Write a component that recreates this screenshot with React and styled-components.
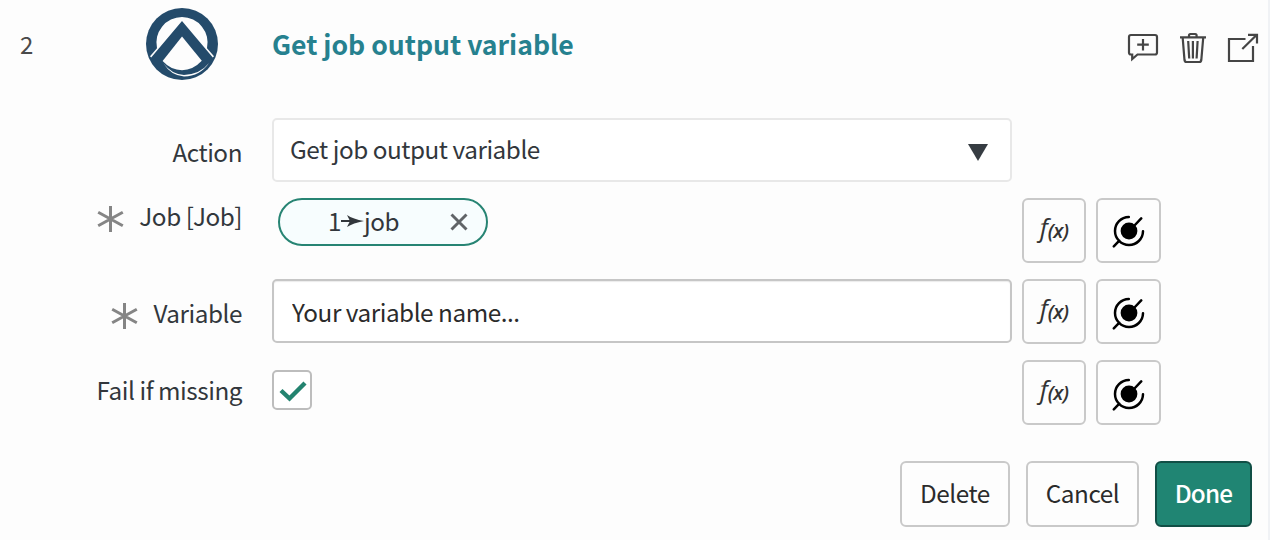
import React from "react";
import styled, { createGlobalStyle } from "styled-components";

const Global = createGlobalStyle`
  *, *::before, *::after { box-sizing: border-box; }
  body {
    margin: 0;
    background: #fdfdfd;
    color: #32373c;
    font-family: "Noto Sans CJK SC", "Open Sans", sans-serif;
    font-size: 24.3px;
    letter-spacing: -0.46px;
    line-height: 36px;
  }
`;

const Card = styled.section`
  display: flex;
  flex-direction: column;
  width: 1270px;
  height: 540px;
  overflow: hidden;
  background: #fdfdfd;
  border-right: 2px solid #f0f2f5;
`;

const Header = styled.header`
  display: flex;
  align-items: flex-start;
  height: 118px;
  padding: 8px 9px 0 20px;
`;

const StepNumber = styled.span`
  width: 126px;
  padding-top: 18px;
  font-size: 24px;
  color: #4a4a4a;
`;

const Logo = styled.svg`
  width: 72px;
  height: 72px;
  flex: none;
`;

const Title = styled.h2`
  flex: 1;
  margin: 0;
  padding: 18px 0 0 54px;
  font-size: 26.6px;
  font-weight: 700;
  letter-spacing: -0.02px;
  color: #26818f;
`;

const HeaderIcons = styled.div`
  display: flex;
  gap: 18px;
  padding-top: 23px;
`;

const HeaderIcon = styled.svg`
  width: 32px;
  height: 34px;
  fill: none;
  stroke: #454545;
  stroke-width: 2.2;
`;

const Form = styled.div`
  display: flex;
  flex-direction: column;
  gap: 16px;
`;

const Row = styled.div`
  display: flex;
  align-items: flex-start;
  height: ${(p) => p.$height || 65}px;
`;

const Label = styled.label`
  display: flex;
  justify-content: flex-end;
  align-items: center;
  gap: 15px;
  width: 242px;
  margin-right: 30px;
  padding-top: ${(p) => p.$top}px;
`;

const Star = styled.svg`
  width: 27px;
  height: 28px;
  margin-top: 6px;
  stroke: #858585;
  stroke-width: 3;
`;

const Field = styled.div`
  display: flex;
  width: 740px;
  margin-right: 10px;
`;

const Select = styled.div`
  display: flex;
  justify-content: space-between;
  align-items: center;
  width: 100%;
  height: 64px;
  padding: 0 22px 2px 16px;
  border: 2px solid #e8e8e8;
  border-radius: 5px;
  background: #fff;
`;

const Caret = styled.svg`
  width: 20px;
  height: 17px;
  margin-top: 6px;
  fill: #363c42;
`;

const TextInput = styled.input`
  width: 100%;
  height: 64px;
  padding: 0 17px 0 18px;
  border: 2px solid #c6c6c6;
  border-radius: 5px;
  background: #fff;
  box-shadow: inset 0 1px 1px rgba(0, 0, 0, 0.08);
  color: #2b2b2b;
  font: inherit;
  letter-spacing: inherit;
  outline: none;
`;

const Pill = styled.div`
  display: flex;
  align-items: center;
  justify-content: space-between;
  width: 210px;
  height: 48px;
  margin-left: 6px;
  padding: 0 18px 0 48px;
  border: 2px solid #278473;
  border-radius: 24px;
  background: #f7fdfe;
`;

const PillText = styled.span`
  display: flex;
  align-items: center;
  margin-top: -2px;
`;

const Arrow = styled.svg`
  width: 23px;
  height: 14px;
  fill: #32373c;
`;

const Close = styled.svg`
  width: 18px;
  height: 18px;
  stroke: #606467;
  stroke-width: 2.9;
`;

const Checkbox = styled.div`
  display: flex;
  align-items: center;
  justify-content: center;
  width: 40px;
  height: 40px;
  margin-top: 10px;
  border: 2px solid #bdbdbd;
  border-radius: 5px;
  background: #fff;
`;

const Check = styled.svg`
  width: 28px;
  height: 22px;
  margin: 2px 0 0 1px;
  fill: none;
  stroke: #23836f;
  stroke-width: 4.4;
`;

const Tools = styled.div`
  display: flex;
  gap: 10px;
`;

const ToolButton = styled.button`
  display: flex;
  align-items: center;
  justify-content: center;
  width: ${(p) => p.$width}px;
  height: 65px;
  padding: ${(p) => p.$drop || 0}px 0 0;
  border: 2px solid #c9c9c9;
  border-radius: 6px;
  background: #fdfdfd;
`;

const Fx = styled.span`
  display: flex;
  align-items: baseline;
  padding-bottom: 4px;
  font-family: "Open Sans", sans-serif;
  font-style: italic;
  font-weight: 500;
  font-size: 26px;
  line-height: 32px;
  color: #333;
`;

const FxArg = styled.span`
  position: relative;
  top: 1px;
  font-size: 20px;
  font-weight: 600;
  letter-spacing: -0.7px;
`;

const Pin = styled.svg`
  width: 34px;
  height: 34px;
  fill: none;
  stroke: #000;
  stroke-width: 2.5;
  stroke-linecap: round;
`;

const Footer = styled.footer`
  display: flex;
  justify-content: flex-end;
  gap: 16px;
  padding: 36px 16px 0 0;
`;

const Action = styled.button`
  width: ${(p) => p.$width}px;
  height: 66px;
  padding: 0 0 2px;
  border: 2px solid ${(p) => (p.$primary ? "#114f46" : "#c9c9c9")};
  border-radius: 6px;
  background: ${(p) => (p.$primary ? "#208573" : "#fdfdfd")};
  color: ${(p) => (p.$primary ? "#fff" : "#2b2b2b")};
  font: inherit;
  font-weight: ${(p) => (p.$primary ? 500 : 400)};
  letter-spacing: ${(p) => (p.$primary ? "-0.8px" : "inherit")};
`;

const Required = () => (
  <Star viewBox="0 0 27 28">
    <path d="M13.5 1v26M1.2 7.2l24.6 13.6M25.8 7.2L1.2 20.8" />
  </Star>
);

const FieldTools = ({ drop }) => (
  <Tools>
    <ToolButton $width={64}>
      <Fx>f<FxArg>(x)</FxArg></Fx>
    </ToolButton>
    <ToolButton $width={65} $drop={drop}>
      <Pin viewBox="0 0 34 34">
        <circle cx="17" cy="17" r="8.4" fill="#000" stroke="none" />
        <path d="M16.8 3A14 14 0 1 0 31 17.2M22 12L29.2 4.4M7.3 26.7L1.8 32.3" />
      </Pin>
    </ToolButton>
  </Tools>
);

export default function App() {
  return (
    <>
      <Global />
      <Card>
        <Header>
          <StepNumber>2</StepNumber>
          <Logo viewBox="0 0 72 72">
            <circle cx="36" cy="36" r="36" fill="#244b6b" />
            <path
              d="M4 48.2L11 40.2A25.6 25.6 0 1 1 61 40.2L68 48.2L66.8 49.4L36 13L5.2 49.4Z"
              fill="#fdfdfd"
            />
            <path d="M36 28.5L55.8 52.8Q47 62.2 36 62.2Q25 62.2 16.6 53Z" fill="#fdfdfd" />
            <path
              d="M17.6 55.5Q26 66.6 38 66.9Q54 66.4 63 55Q54 68.2 38 68.4Q25 67.6 17.6 55.5Z"
              fill="#fdfdfd"
            />
          </Logo>
          <Title>Get job output variable</Title>
          <HeaderIcons>
            <HeaderIcon viewBox="0 0 32 34">
              <path d="M4 4H28Q30 4 30 6V21.5Q30 23.5 28 23.5H10.5L5.2 28V23.5H4Q2 23.5 2 21.5V6Q2 4 4 4ZM16 8V19.5M10.2 13.7H21.8" />
            </HeaderIcon>
            <HeaderIcon viewBox="0 0 32 34">
              <path d="M3 6.4H29M12 6V4.4Q12 3 13.4 3H18.2Q19.6 3 19.6 4.4V6M5.7 7L7.5 29Q7.8 31 9.5 31H22.3Q24 31 24.3 29L26.2 7M11.2 10L12.2 27.5M15.9 10V27.5M20.6 10L19.6 27.5" />
            </HeaderIcon>
            <HeaderIcon viewBox="0 0 32 34">
              <path d="M18.5 8H2V30H26V15M15.3 18L29.8 3.8M21 3.8H30V12.5" />
            </HeaderIcon>
          </HeaderIcons>
        </Header>
        <Form>
          <Row $height={64}>
            <Label $top={16}>Action</Label>
            <Field>
              <Select>
                Get job output variable
                <Caret viewBox="0 0 20 17"><path d="M0 0H20L10 17Z" /></Caret>
              </Select>
            </Field>
          </Row>
          <Row>
            <Label $top={0}><Required />Job [Job]</Label>
            <Field>
              <Pill>
                <PillText>
                  1
                  <Arrow viewBox="0 0 23 14">
                    <path d="M0 6H8.5L6 1Q12 5 23 7Q12 9 6 13L8.5 8H0Z" />
                  </Arrow>
                  job
                </PillText>
                <Close viewBox="0 0 18 18"><path d="M1.5 1.5l15 15M16.5 1.5l-15 15" /></Close>
              </Pill>
            </Field>
            <FieldTools />
          </Row>
          <Row>
            <Label $top={16}><Required />Variable</Label>
            <Field><TextInput defaultValue="Your variable name..." /></Field>
            <FieldTools drop={2} />
          </Row>
          <Row>
            <Label $top={12}>Fail if missing</Label>
            <Field>
              <Checkbox>
                <Check viewBox="0 0 28 22"><path d="M2 10.5L10.5 18.5L26 3" /></Check>
              </Checkbox>
            </Field>
            <FieldTools drop={2} />
          </Row>
        </Form>
        <Footer>
          <Action $width={110}>Delete</Action>
          <Action $width={113}>Cancel</Action>
          <Action $width={97} $primary>Done</Action>
        </Footer>
      </Card>
    </>
  );
}
